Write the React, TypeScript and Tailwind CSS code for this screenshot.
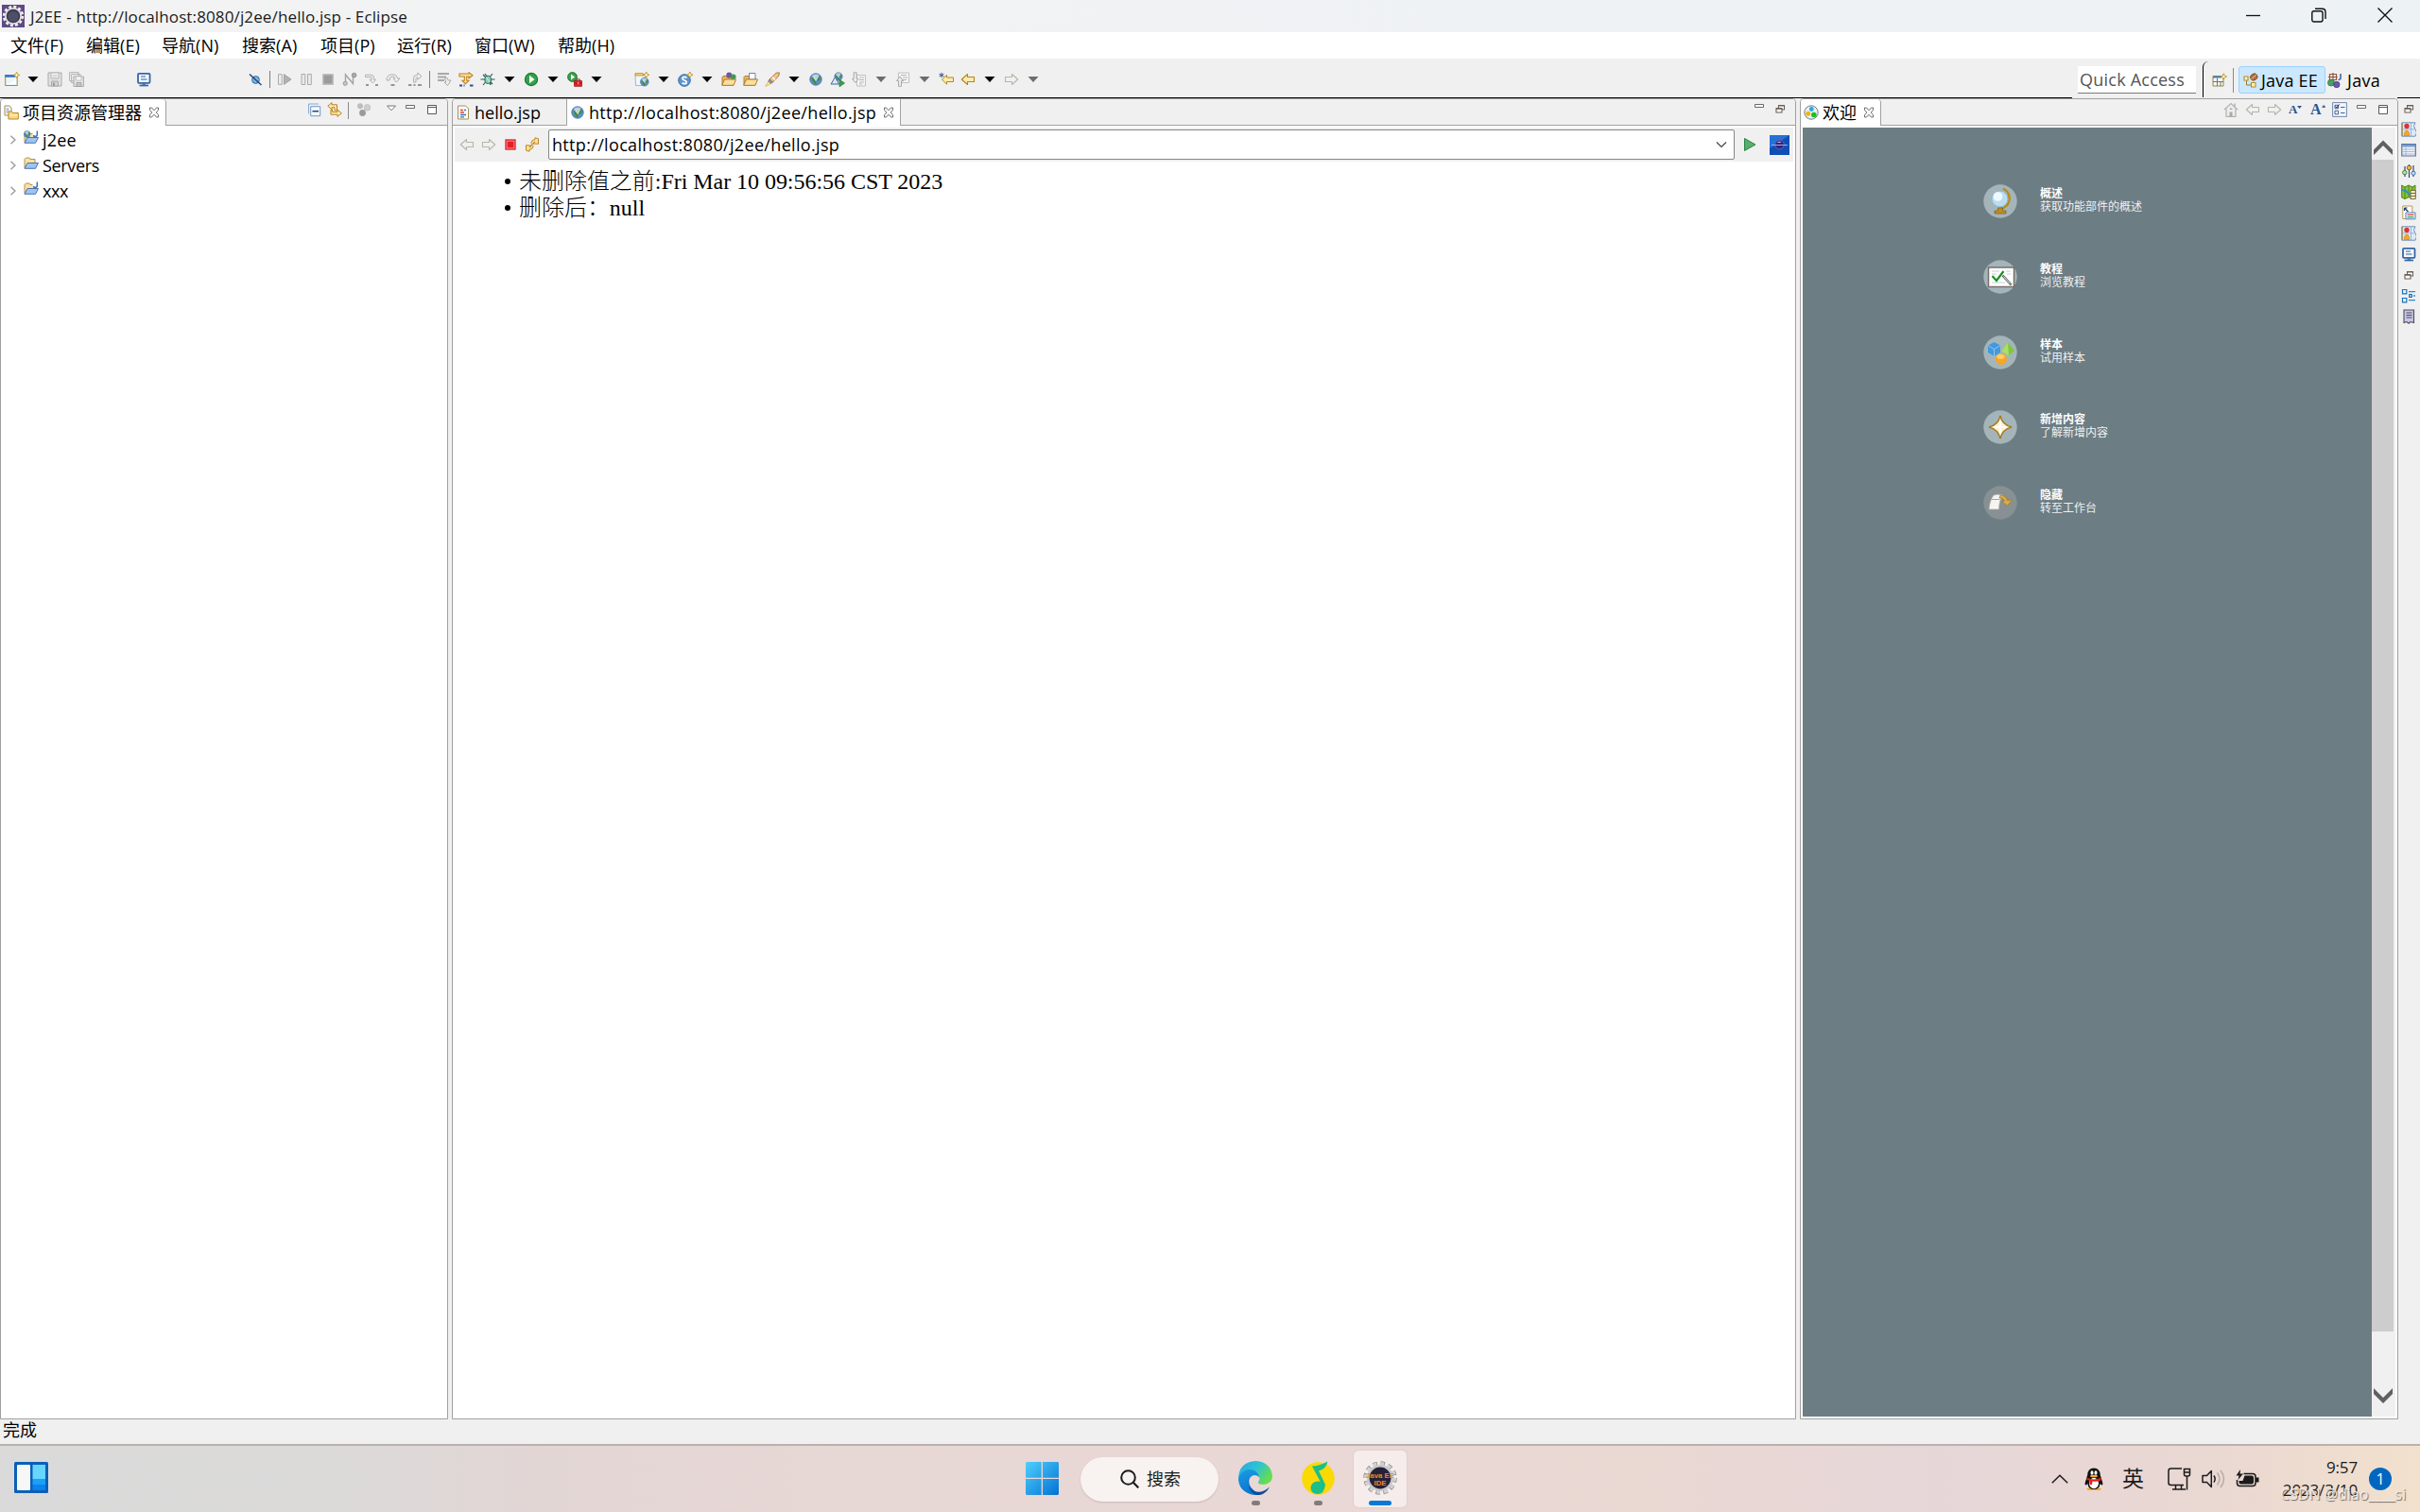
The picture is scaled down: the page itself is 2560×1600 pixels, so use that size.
import React from "react";

type P = { children?: React.ReactNode };

const LATIN = "font-['Open_Sans','Noto_Sans_CJK_SC',sans-serif]";

function Ic({ children }: P) {
  return (
    <svg viewBox="0 0 16 16" className="h-4 w-4 shrink-0" fill="none">
      {children}
    </svg>
  );
}

/* ---------- small reusable glyphs ---------- */

const Arrow = ({ gray = false }: { gray?: boolean }) => (
  <Ic>
    <path d="M2.500 5h11L8 11z" fill={gray ? "#6d6d6d" : "#000"} />
  </Ic>
);

const Plus = ({ x, y }: { x: number; y: number }) => (
  <path
    transform={`translate(${x} ${y})`}
    d="M0-3.200 1-1 3.200 0 1 1 0 3.200-1 1-3.200 0-1-1z"
    fill="#fff2b0"
    stroke="#b98a1e"
    strokeWidth=".8"
  />
);

const GlobeShape = ({ x = 8, y = 8, r = 6.2 }: { x?: number; y?: number; r?: number }) => (
  <g transform={`translate(${x} ${y}) scale(${r / 6.2})`}>
    <circle r="6.200" fill="#5b93cf" stroke="#3f6498" strokeWidth=".8" />
    <path d="M-4-4Q0-6.500 3.500-4.500L1.500-2Q-1 1-2.500-1z" fill="#d6ebf7" opacity=".75" />
    <path d="M-4.500-2 -1.500-1 0 1.500 1 5 -1 5Q-4 2-4.500-2zM1-2.500 4.500-3 4.500 0 2 2.500z" fill="#3f8a4c" />
    <path d="M-2-2 0 1 2.500-3" stroke="#f3e6a4" strokeWidth="1.200" />
  </g>
);

const NewWizard = () => (
  <Ic>
    <rect x=".7" y="3.500" width="12.500" height="11" fill="#eaf6fc" stroke="#a98a3f" />
    <path d="M.2 3h11v2.800H.2z" fill="#3c79c4" />
    <path d="M2 13Q9 12 11.500 7v6z" fill="#fff" />
    <Plus x={12.6} y={3.4} />
  </Ic>
);
const Save = () => (
  <Ic>
    <path d="M1 1h14v14H1z" fill="#e2e2e2" stroke="#a9a9a9" />
    <path d="M4 1h8v6H4z" fill="#f5f5f5" stroke="#b4b4b4" />
    <path d="M5.500 3.500h5M5.500 5.200h5" stroke="#c4c4c4" strokeWidth=".8" />
    <path d="M4.500 10h7v5h-7z" fill="#d2d2d2" stroke="#a9a9a9" />
    <path d="M6 11.500h2V15H6z" fill="#9d9d9d" />
  </Ic>
);
const SaveAll = () => (
  <Ic>
    <path d="M.6.6h9.500v9H.6zM2.600 2.600h9.500v9H2.600z" fill="#eee" stroke="#b4b4b4" />
    <path d="M5 5h10.400v10.400H5z" fill="#e2e2e2" stroke="#a9a9a9" />
    <path d="M7.500 5h5.500v4H7.500z" fill="#f7f7f7" stroke="#bbb" strokeWidth=".8" />
    <path d="M8 11.500h5v4H8z" fill="#c4c4c4" stroke="#a0a0a0" strokeWidth=".8" />
  </Ic>
);
const Monitor = () => (
  <Ic>
    <rect x="2" y="1.800" width="12.500" height="10" rx="1" fill="#f2f8fd" stroke="#3566a8" strokeWidth="1.800" />
    <path d="M5 5h5M5 8h6.500" stroke="#3d5b96" strokeWidth="1.200" />
    <path d="M6.500 12.500h3.500v1.300H6.500z" fill="#3566a8" />
    <path d="M3.500 14.500h9.500" stroke="#3566a8" strokeWidth="1.700" />
  </Ic>
);
const Skip = () => (
  <Ic>
    <circle cx="8.500" cy="8.500" r="3.900" fill="#7fb6df" stroke="#2b6a9c" />
    <path d="M2 2.500 14.500 14" stroke="#20407c" strokeWidth="1.400" />
  </Ic>
);
const Resume = () => (
  <Ic>
    <path d="M1.500 2.700h3.800v10.600H1.500z" fill="#ececec" stroke="#aaa" />
    <path d="M7.500 2.700 15 8l-7.500 5.300z" fill="#b2b2b2" stroke="#a0a0a0" />
  </Ic>
);
const Pause = () => (
  <Ic>
    <path d="M3 2.500h3.800v11H3zM9.500 2.500h3.800v11H9.500z" fill="#e9e9e9" stroke="#aaa" />
  </Ic>
);
const StopG = () => (
  <Ic>
    <rect x="3" y="3" width="10" height="10" fill="#9b9b9b" stroke="#b3b3b3" strokeWidth="1.600" />
  </Ic>
);
const Disconnect = () => (
  <Ic>
    <path d="M3.500 12V3l8 9.500V5" stroke="#a2a2a2" strokeWidth="1.400" />
    <circle cx="3.200" cy="12.300" r="2.100" fill="#c6c6c6" stroke="#9a9a9a" />
    <circle cx="12.600" cy="3.600" r="2.300" fill="#aaa" stroke="#8f8f8f" />
  </Ic>
);
const StepInto = () => (
  <Ic>
    <path d="M1.500 3.200h6q3 0 3 3v2h2.300L9.300 11.800 6 8.200h2.300v-1.500q0-1.200-1.200-1.200H1.500z" fill="#efefef" stroke="#b0b0b0" />
    <path d="M2 14h3M12 14h3" stroke="#949494" strokeWidth="2" />
  </Ic>
);
const StepOver = () => (
  <Ic>
    <path d="M1 9Q1 2.800 7 2.800q5 0 5.500 4.200H15l-3.700 4-3.300-4h2Q9.500 5 7 5 4 5 4 9z" fill="#efefef" stroke="#b0b0b0" />
    <path d="M5.500 14h4" stroke="#949494" strokeWidth="2" />
  </Ic>
);
const StepReturn = () => (
  <Ic>
    <path d="M6.500 11V6.500q0-3 3-3h1.300V1L15 4.700l-4.200 3.600V6H9.700Q9 6 9 7v4z" fill="#efefef" stroke="#b0b0b0" />
    <path d="M1 14h3.500M11 14h4M6.500 14h2" stroke="#949494" strokeWidth="1.800" />
  </Ic>
);
const DropFrame = () => (
  <Ic>
    <path d="M1 2h12M1 5.500h9M1 9h7" stroke="#a9a9a9" strokeWidth="1.900" />
    <path d="M9 6q3 0 3 3h3l-3.500 5.500L8 11h2q0-2-1-2z" fill="#f2f2f2" stroke="#aaa" />
  </Ic>
);
const StepFilters = () => (
  <Ic>
    <path d="M1 2h10V.8l4 3-4 3V5H8.700v4.300H11l-3.600 3.400L4 9.300h2.300V5H1z" fill="#fbe3a7" stroke="#be7f1c" strokeWidth="1.100" />
    <path d="M1 14.500h3M12 14.500h3.500M5.500 14.500h1" stroke="#2f4f86" strokeWidth="1.900" />
  </Ic>
);
const Bug = () => (
  <Ic>
    <path d="M8 8 3 3M8 8l5-6M8 8H.5M8 8h7.500M8 8l-5 6M8 8l5 5M5 2l2 3M11 14l-1-3" stroke="#1f5158" strokeWidth="1.100" />
    <ellipse cx="8.200" cy="8.300" rx="3.300" ry="4.100" fill="#8fd0a7" stroke="#275f66" />
    <path d="m6.500 6 3.500 5" stroke="#d8f3dd" />
  </Ic>
);
const Run = () => (
  <Ic>
    <circle cx="8" cy="8" r="6.600" fill="#35a04a" stroke="#1d7a35" strokeWidth="1.200" />
    <path d="M6 3.800 11.500 8 6 12.200z" fill="#fff" />
  </Ic>
);
const RunExt = () => (
  <Ic>
    <circle cx="5.500" cy="5.500" r="4.900" fill="#3a9f4c" stroke="#1d7a35" />
    <path d="M4 2.500 8 5.500 4 8.500z" fill="#fff" />
    <path d="M7.500 9.500h8v5.800h-8z" fill="#e0292b" stroke="#a21417" strokeWidth=".8" />
    <path d="M9.800 9.300V7.900h3.500v1.400M7.500 12h8" stroke="#a21417" strokeWidth="1" />
    <path d="M11 11.300h1.200v1.500H11z" fill="#ffdede" />
  </Ic>
);
const NewWeb = () => (
  <Ic>
    <path d="M1 2.500h10l1 4v8H1.500z" fill="#f0f6fb" stroke="#a9b6c4" />
    <path d="M1 1.500h8l1 2.500H1z" fill="#f2cf74" stroke="#b98f32" strokeWidth=".8" />
    <GlobeShape x={10.8} y={10.6} r={4.4} />
    <Plus x={12.6} y={3.2} />
  </Ic>
);
const NewServlet = () => (
  <Ic>
    <circle cx="7" cy="9" r="6.300" fill="#5c95cb" stroke="#3b6ea8" />
    <path d="M9.500 6.500Q7 4.500 5.200 6.200 4.300 8 7 9q3 1 2 3-2 1.500-4.500-.3" stroke="#fff" strokeWidth="1.700" />
    <Plus x={12.8} y={3.2} />
  </Ic>
);
const OpenFolder = ({ balls = false }: { balls?: boolean }) => (
  <Ic>
    <path d="M1 14V5.500l1-1h3.500L6.500 6H13v8z" fill="#e9b65a" stroke="#a9722b" strokeWidth=".9" />
    {balls ? (
      <>
        <circle cx="8.300" cy="3.600" r="3" fill="#6b57a5" />
        <circle cx="12.700" cy="5.300" r="2.900" fill="#3d9a55" />
      </>
    ) : (
      <path d="M6.500 8V1.500h6.500V8z" fill="#fff" stroke="#6f87b3" />
    )}
    <path d="M.7 14.300 3.500 8H15.500L13 14.300z" fill="#fbdf9a" stroke="#a9722b" strokeWidth=".9" />
  </Ic>
);
const Rocket = () => (
  <Ic>
    <path d="M5 8 12 1.200 15.300.8 15 4 8.500 11z" fill="#efc489" stroke="#a97335" strokeWidth=".9" />
    <path d="m8 5.500 3 3" stroke="#fff" strokeWidth="1.200" />
    <path d="M5 8 8.500 11 6 12.500 3.500 10z" fill="#8e99ad" stroke="#5f6b80" strokeWidth=".7" />
    <path d="M3.500 10.500 .8 15.300 6 12.800z" fill="#fff3a0" stroke="#e3a93b" strokeWidth=".8" />
  </Ic>
);
const Globe = () => (
  <Ic>
    <GlobeShape />
  </Ic>
);
const Launch = () => (
  <Ic>
    <GlobeShape x={9} y={5} r={4.2} />
    <path d="M1 13 5.500 5.500 9.500 13z" fill="#dbe8f6" stroke="#43659c" />
    <path d="M10 8l5.500 4-5.500 3.800z" fill="#37a050" stroke="#1e7a36" strokeWidth=".7" />
  </Ic>
);
const NextAnn = () => (
  <Ic>
    <path d="M5.500 3.500h9V15h-9z" fill="#f5f5f5" stroke="#c0c0c0" />
    <path d="M8 6h5M8 8.500h5M8 11h5M8 13h3" stroke="#b5b5b5" />
    <path d="M2.200.8h3v6.500h2L3.700 11.500.6 7.300h1.600z" fill="#eee" stroke="#a8a8a8" />
  </Ic>
);
const PrevAnn = () => (
  <Ic>
    <path d="M3.500 1h11v10.500h-11z" fill="#f5f5f5" stroke="#c0c0c0" />
    <path d="M6 3.500h6M8 6h5M8 8.500h4" stroke="#b5b5b5" />
    <path d="M3.500 15.300V9.500h-2L5 5l3.500 4.500h-2v5.800z" fill="#eee" stroke="#a8a8a8" />
  </Ic>
);
const BackShape = ({ fill, stroke }: { fill: string; stroke: string }) => (
  <path d="M1.300 8 7.500 2.500v3H14.500v5H7.500v3z" fill={fill} stroke={stroke} strokeWidth="1.100" strokeLinejoin="round" />
);
const Back = ({ gray = false }: { gray?: boolean }) => (
  <Ic>
    <BackShape fill={gray ? "#f0f0ee" : "#fdecae"} stroke={gray ? "#b6b6ae" : "#b9841c"} />
  </Ic>
);
const Fwd = () => (
  <Ic>
    <g transform="matrix(-1 0 0 1 16 0)">
      <BackShape fill="#f0f0ee" stroke="#b6b6ae" />
    </g>
  </Ic>
);
const LastEdit = () => (
  <Ic>
    <path d="M3.500 8 8.500 3.500v2.500H15.500v4.500H8.500v2.700z" fill="#fdecae" stroke="#b9841c" strokeLinejoin="round" />
    <path d="M3 .8v5.400M.5 2.200l5 2.600M5.500 2.200l-5 2.600" stroke="#27497e" strokeWidth=".9" />
  </Ic>
);

/* view chrome */
const Close = () => (
  <svg viewBox="0 0 12 12" className="h-3 w-3 shrink-0" fill="none">
    <path
      d="M1.500 1h2L6 3.800 8.500 1h2v2.500L8.200 6l2.300 2.500V11h-2L6 8.200 3.500 11h-2V8.500L3.800 6 1.500 3.500z"
      stroke="#666"
      fill="#fafafa"
      strokeWidth=".95"
    />
  </svg>
);
const MinBtn = () => (
  <Ic>
    <path d="M3.500 3.500h9v3h-9z" fill="#fff" stroke="#6a6a6a" />
  </Ic>
);
const MaxBtn = () => (
  <Ic>
    <path d="M3.500 3.500h9v9h-9zM3.500 5.500h9" fill="#fff" stroke="#5b5b5b" />
  </Ic>
);
const RestoreBtn = () => (
  <Ic>
    <path d="M6.500 4.500h6v4.500h-6zM6.500 5h6" fill="#fff" stroke="#6a5f57" strokeWidth="1.100" />
    <path d="M4 7.500h6V12H4zM4 8.200h6" fill="#fff" stroke="#6a5f57" strokeWidth="1.100" />
  </Ic>
);
const MenuTri = () => (
  <Ic>
    <path d="M3.500 4h9L8 8.800z" fill="#fff" stroke="#777" />
  </Ic>
);
const ExplorerIcon = () => (
  <Ic>
    <path d="M1 1h5l2 2v8H1z" fill="#fff" stroke="#a58a45" />
    <path d="M2.500 4h3M2.500 6h3M2.500 8h2" stroke="#5f86c2" strokeWidth=".9" />
    <path d="M5 15V7h3.500l1 1.500H15.300V15z" fill="#fbd983" stroke="#b8862e" />
    <path d="M6 11h9" stroke="#fff2c8" />
  </Ic>
);
const Collapse = () => (
  <Ic>
    <path d="M2.500 12.500v-10.500h10.500" stroke="#8baad3" />
    <path d="M4.700 4.700h10v10h-10z" fill="#f3f9fd" stroke="#7096c8" />
    <path d="M6.500 9.700h6.500" stroke="#1c3f86" strokeWidth="1.500" />
  </Ic>
);
const Link = () => (
  <Ic>
    <path d="M.8 4.200 5 .6v2.200h5.500v6H8V5.700H5v2.100z" fill="#fdeab2" stroke="#bb811a" strokeWidth="1" />
    <path d="M15.300 11.800 11 8.200v2.200H5.500V8H4v5.200h7v2.200z" fill="#fdeab2" stroke="#bb811a" strokeWidth="1" />
  </Ic>
);
const Focus = () => (
  <Ic>
    <circle cx="4" cy="4.300" r="3" fill="#bdbdbd" />
    <circle cx="11.500" cy="5.800" r="3.200" fill="#cfcfcf" stroke="#c0c0c0" />
    <circle cx="6.500" cy="11.500" r="3.400" fill="#9a9a9a" />
  </Ic>
);
const Project = ({ web = false, mark = true }: { web?: boolean; mark?: boolean }) => (
  <Ic>
    <path d="M1 12.500V3.500L2.500 2H6l1 1.500h5v9z" fill="#fbe2a0" stroke="#a98643" strokeWidth=".9" />
    <path d="M1 13.300 4 7.500H15.500L12.500 13.300z" fill="#9fc4f0" stroke="#3d67ad" strokeWidth=".9" />
    {web && <GlobeShape x={3.7} y={4} r={3.4} />}
    {mark && (
      <>
        <path d="M9.500 0h6.500v5.500H9.500z" fill="#fff" />
        <path d="M14.300.5v4q0 2-2.300 2-1.500 0-1.500-1.500" stroke="#4370b3" strokeWidth="1.500" />
      </>
    )}
  </Ic>
);
const JspFile = () => (
  <Ic>
    <path d="M2.500 1h8l3 3v11h-11z" fill="#fdfdf6" stroke="#a4905a" />
    <path d="M5 5.500h3M5 8h4" stroke="#d04a4a" strokeWidth="1.300" />
    <path d="M5 10.500h6M5 12.800h4M9 5.500h2" stroke="#3f6fb5" strokeWidth="1.300" />
  </Ic>
);
const StopRed = () => (
  <Ic>
    <rect x="2.800" y="2.800" width="10.400" height="10.400" fill="#e8242d" stroke="#d3444a" />
    <rect x="4.200" y="4.200" width="7.600" height="7.600" fill="#e71d27" stroke="#f7999c" strokeWidth=".8" />
  </Ic>
);
const Refresh = () => (
  <Ic>
    <path d="M6.800 6.200Q7.500 2.700 11 2.600V.8l3.500 1v5.500L9.200 7l1.700-1.800Q9 5.200 8.600 8z" fill="#fbe19b" stroke="#b8811c" strokeWidth=".95" />
    <path d="M9.200 9.800Q8.500 13.300 5 13.400v1.800l-3.500-1V8.700L6.800 9l-1.700 1.800Q7 10.800 7.400 8z" fill="#fbe19b" stroke="#b8811c" strokeWidth=".95" />
  </Ic>
);
const Go = () => (
  <Ic>
    <path d="M2.500 1.500 14 8 2.500 14.500z" fill="#55b06c" stroke="#2d8146" />
  </Ic>
);
const WelcomeIcon = () => (
  <Ic>
    <circle cx="8" cy="8" r="7.200" fill="#e9f0ee" stroke="#6c7f86" />
    <circle cx="8.300" cy="4.500" r="2.400" fill="#29a8e6" />
    <circle cx="4.700" cy="9.300" r="2.500" fill="#f2b314" />
    <circle cx="10.800" cy="10.500" r="2.800" fill="#17c21d" />
  </Ic>
);
const Home = () => (
  <Ic>
    <path d="M1 8 8 1.500 15 8M3 7v8.300h10V7" fill="#ececec" stroke="#b2b2ae" strokeWidth="1.200" />
    <path d="M12 1.500v3.500" stroke="#b2b2ae" strokeWidth="1.500" />
    <path d="M6.500 10.500h3v5h-3zM6.800 6.500h2.500V8H6.800z" fill="#a9a9a5" />
  </Ic>
);
const Customize = () => (
  <Ic>
    <path d="M.6.6h14.800v14.800H.6z" fill="#f0f6fd" stroke="#7088b0" />
    <path d="M3 3.300h3.500v3.500H3zM3 9.300h3.500v3.500H3z" fill="#fff" stroke="#3d4c6e" strokeWidth=".9" />
    <path d="m3.500 4.500 1.300 1.500L7.500 2.500" stroke="#222" />
    <path d="M9 5.500h4.500M9 11.500h4.500" stroke="#3e62a3" strokeWidth="1.200" />
  </Ic>
);
const OpenPersp = () => (
  <Ic>
    <path d="M1 3.500h11v10.500H1z" fill="#f4f8fa" stroke="#96854e" />
    <path d="M1 3.500h9v2H1z" fill="#4b82b9" />
    <path d="M5.500 5.500V14M1 9.500h11M9 9.500V14" stroke="#7d7556" />
    <Plus x={12.3} y={4} />
  </Ic>
);
const JavaEE = () => (
  <Ic>
    <path d="M3.500 5.500v7.500h5" stroke="#9b7b2c" />
    <path d="M1 4h4v4H1zM8.500 10.500h4.500v4.500H8.500z" fill="#fff3c2" stroke="#b88d22" strokeWidth="1.100" />
    <ellipse cx="11.300" cy="4.500" rx="3.900" ry="3.400" transform="rotate(-35 11.300 4.500)" fill="#b0703d" stroke="#83451d" strokeWidth=".8" />
    <path d="M8.500 6.500Q11 5 14 2" stroke="#ecc79a" />
  </Ic>
);
const JavaP = () => (
  <Ic>
    <path d="M2.500 1.500h7v6h-7zM.8 4.500h10M6 0v8" stroke="#8c5a3c" strokeWidth="1.200" />
    <path d="M14 1v4.500q0 2-2.500 2" stroke="#3d6aa9" strokeWidth="1.600" />
    <circle cx="4" cy="10.500" r="3.500" fill="#4a9e62" stroke="#2e7747" strokeWidth=".8" />
    <circle cx="9.800" cy="12.500" r="3.200" fill="#6a58a9" stroke="#473784" strokeWidth=".8" />
  </Ic>
);
const Servers = () => (
  <Ic>
    <path d="M1 .8h14q-3 4 0 7t0 7.400H1z" fill="#ddeaf7" stroke="#6f8fba" />
    <path d="M1 .8v14.500" stroke="#a0945a" strokeWidth="1.500" />
    <path d="M10.500 1v14M2 7.800h12" stroke="#8dabd1" strokeWidth=".8" />
    <circle cx="6" cy="4.500" r="2.700" fill="#df3138" />
    <path d="M3.200 14.500q0-5 2.800-5.500 2.800.5 2.800 5.500z" fill="#f6a623" stroke="#d07a12" strokeWidth=".6" />
  </Ic>
);
const TableIc = () => (
  <Ic>
    <path d="M.8 1.500h14.500v12.500H.8z" fill="#eef3fa" stroke="#5e6f95" strokeWidth="1.200" />
    <path d="M1 2h14v2.500H1z" fill="#6f9fd6" />
    <path d="M1 7h14M1 9.500h14M1 12h14M5 4.500V14" stroke="#a5b2cb" strokeWidth=".9" />
  </Ic>
);
const Sliders = () => (
  <Ic>
    <path d="M4 3v11M8.500 1v14M13 2v12" stroke="#2d4a7d" strokeWidth="1.200" />
    <circle cx="3.800" cy="9.500" r="2.200" fill="#b6e0a1" stroke="#47833a" />
    <circle cx="8.500" cy="4.500" r="2.300" fill="#e6b84a" stroke="#8f6417" />
    <circle cx="13" cy="10.300" r="2.100" fill="#c3dcf4" stroke="#486fa8" />
  </Ic>
);
const MapIc = () => (
  <Ic>
    <path d="M.7 1 4 3l4-2 4 2 3-2v13l-3 1.500-4-2-4 2L.7 14z" fill="#86c832" stroke="#4c7e1b" />
    <path d="M4 3v12M8 1v12M12 3v10" stroke="#4c7e1b" strokeWidth=".9" />
    <path d="M1 6q4 0 6 3t4 1" stroke="#3190c7" strokeWidth="2" />
    <path d="M10 6.500h5.300v9H10z" fill="#f7edc1" stroke="#7a6a3a" />
    <path d="M10 9.500h5.300M10 12.500h5.300" stroke="#7a6a3a" />
  </Ic>
);
const Snippets = () => (
  <Ic>
    <path d="M1.800 1h10v13.500h-10z" fill="#fff" stroke="#b19d5d" />
    <path d="m3.500 3 4 4M3.500 3h3M3.500 3v3" stroke="#223b66" strokeWidth="1.200" />
    <path d="M5 8h10v6.800H5z" fill="#fff" stroke="#4d7cba" />
    <path d="M6.500 10.300h7" stroke="#da3b36" strokeWidth="1.300" />
    <path d="M6.500 12.700h7" stroke="#2f9b55" strokeWidth="1.300" />
  </Ic>
);
const Outline = () => (
  <Ic>
    <path d="M1.500 1.500h4.300v4.300H1.500zM1.500 10.500h4.300v4.300H1.500zM8.700 6.700h2.600v2.600H8.700z" fill="#e5f3fc" stroke="#1e73b5" strokeWidth="1.200" />
    <path d="M8 3.600h7M8 12.600h7M13 8h2" stroke="#2f8acb" strokeWidth="1.300" />
  </Ic>
);
const TaskIc = () => (
  <Ic>
    <path d="M3 1h10.500v13.500l-3.500-1-2 1.700-2-1.700-3 1z" fill="#c9c7e8" stroke="#4d4d55" strokeWidth="1.100" />
    <path d="M5.500 4h6M5.500 6.500h6M5.500 9h6" stroke="#4a4a58" strokeWidth="1.100" />
  </Ic>
);

/* ---------- toolbar cells ---------- */
const C = ({ children }: P) => <div className="flex w-[23px] shrink-0 justify-center">{children}</div>;
const CW = ({ children }: P) => <div className="flex w-6 shrink-0 justify-center">{children}</div>;
const CN = ({ gray }: { gray?: boolean }) => (
  <div className="flex w-[22px] shrink-0 justify-center pr-px">
    <Arrow gray={gray} />
  </div>
);
const Sep = () => (
  <div className="flex h-[18px] w-2 shrink-0 justify-center">
    <div className="w-px bg-[#7d7d7d]" />
  </div>
);

function TitleBar() {
  return (
    <div className="flex h-[34px] items-center bg-gradient-to-r from-[#f3f3f3] to-[#edf2f5] pl-0.5">
      <svg viewBox="0 0 24 24" className="h-6 w-6 shrink-0">
        <rect width="24" height="24" fill="#5d4a86" />
        <circle cx="12" cy="12" r="9.800" fill="none" stroke="#f2efe9" strokeWidth="2.800" strokeDasharray="3 2.130" />
        <circle cx="12" cy="12" r="8.200" fill="#3b3a50" stroke="#e0dcdc" strokeWidth="1.800" />
        <circle cx="12" cy="12.500" r="5.500" fill="#4b5069" />
      </svg>
      <span className="ml-[6px] whitespace-nowrap text-[17px] leading-none tracking-[0.130px] text-[#1a1a1a]">
        J2EE - http://localhost:8080/j2ee/hello.jsp - Eclipse
      </span>
      <div className="ml-auto flex items-center gap-[54px] pb-0.5 pr-[29px]">
        <svg viewBox="0 0 16 16" className="h-4 w-4">
          <path d="M1 8.500h15" stroke="#111" strokeWidth="1.300" />
        </svg>
        <svg viewBox="0 0 16 16" className="h-4 w-4" fill="none">
          <rect x=".8" y="3.800" width="11.200" height="11.200" rx="2" stroke="#111" strokeWidth="1.400" />
          <path d="M4 1.200h7.500q3.500 0 3.500 3.500V12" stroke="#111" strokeWidth="1.400" />
        </svg>
        <svg viewBox="0 0 16 16" className="h-4 w-4">
          <path d="m.5.5 15 15M15.500.5l-15 15" stroke="#111" strokeWidth="1.400" />
        </svg>
      </div>
    </div>
  );
}

const MENU = [
  ["文件", "(F)", "w-20"],
  ["编辑", "(E)", "w-20"],
  ["导航", "(N)", "w-[85px]"],
  ["搜索", "(A)", "w-[83px]"],
  ["项目", "(P)", "w-[81px]"],
  ["运行", "(R)", "w-[82px]"],
  ["窗口", "(W)", "w-[88px]"],
  ["帮助", "(H)", "w-20"],
];

function MenuBar() {
  return (
    <div className="flex h-7 items-center bg-white pl-[11px] text-black">
      {MENU.map(([zh, key, w]) => (
        <div key={zh} className={`flex items-center whitespace-nowrap leading-none ${w}`}>
          <span className="text-[18px]">{zh}</span>
          <span className="text-[18px] tracking-[0.100px]">{key}</span>
        </div>
      ))}
    </div>
  );
}

function ToolBar() {
  return (
    <div className="flex h-[41px] items-center bg-[#f0f0f0]">
      <div className="flex items-center pl-px pt-[3px]">
        <C><NewWizard /></C><CN />
        <C><Save /></C><C><SaveAll /></C>
        <div className="w-12" />
        <C><Monitor /></C>
        <div className="w-[95px]" />
        <C><Skip /></C>
        <Sep />
        <C><Resume /></C><C><Pause /></C><C><StopG /></C><C><Disconnect /></C>
        <C><StepInto /></C><C><StepOver /></C><C><StepReturn /></C>
        <Sep />
        <C><DropFrame /></C><C><StepFilters /></C>
        <CW><Bug /></CW><CN />
        <CW><Run /></CW><CN />
        <CW><RunExt /></CW><CN />
        <div className="w-[25px]" />
        <CW><NewWeb /></CW><CN />
        <CW><NewServlet /></CW><CN />
        <C><OpenFolder balls /></C><C><OpenFolder /></C>
        <CW><Rocket /></CW><CN />
        <C><Globe /></C><C><Launch /></C>
        <C><NextAnn /></C><C><Arrow gray /></C>
        <C><PrevAnn /></C><C><Arrow gray /></C>
        <C><LastEdit /></C>
        <CW><Back /></CW><CN />
        <C><Fwd /></C><C><Arrow gray /></C>
      </div>
      <div className="ml-auto flex h-full items-center">
        <div className="mt-1 flex h-[29px] w-[125px] items-center border-b border-[#7a7a7a] bg-white pl-[2px]">
          <span className="whitespace-nowrap text-[18px] leading-none tracking-[0.230px] text-[#555]">Quick Access</span>
        </div>
        <div className="ml-[7px] h-full w-2 pt-[3px]">
          <div className="h-full rounded-tl-md border-l border-black" />
        </div>
        <div className="ml-0.5 flex items-center pt-1">
          <OpenPersp />
          <div className="ml-[6px] h-[26px] w-px bg-[#8a8a8a]" />
          <div className="ml-[5px] flex h-[29px] w-[92px] items-center rounded-[3px] border border-[#99d1ff] bg-[#cce8ff] pl-1">
            <JavaEE />
            <span className="ml-[3px] whitespace-nowrap text-[18px] leading-none tracking-[0.200px]">Java EE</span>
          </div>
          <div className="ml-0.5 flex w-[98px] items-center">
            <JavaP />
            <span className="ml-[5px] text-[18px] leading-none tracking-[0.300px]">Java</span>
          </div>
        </div>
      </div>
    </div>
  );
}

const TREE: [string, string, React.ReactNode][] = [
  ["j2ee", "tracking-[0.200px]", <Project web key="j2ee" />],
  ["Servers", "tracking-[-0.350px]", <Project mark={false} key="servers" />],
  ["xxx", "tracking-[-0.400px]", <Project key="xxx" />],
];

function ProjectExplorer() {
  return (
    <section className="flex w-[474px] flex-col rounded-t-[4px] border border-[#a0a0a0] bg-white">
      <div className="flex h-[28px] rounded-t-[4px] bg-[#f0f0f0]">
        <div className="flex w-[175px] items-center rounded-t-[4px] border-r border-[#a0a0a0] bg-white pl-[3px]">
          <ExplorerIcon />
          <span className="ml-1 text-[18px] leading-none">项目资源管理器</span>
          <span className="ml-[7px]"><Close /></span>
        </div>
        <div className="flex flex-1 items-start border-b border-[#a0a0a0] pl-[148px] pt-[3px]">
          <Collapse />
          <div className="ml-[6px]"><Link /></div>
          <div className="ml-[6px] h-[18px] w-px bg-[#8a8a8a]" />
          <div className="ml-2"><Focus /></div>
          <div className="ml-[13px]"><MenuTri /></div>
          <div className="ml-1"><MinBtn /></div>
          <div className="ml-[7px]"><MaxBtn /></div>
        </div>
      </div>
      <div className="pt-px">
        {TREE.map(([t, tracking, ic]) => (
          <div key={t} className="flex h-[27px] items-center pl-[9px]">
            <svg viewBox="0 0 8 10" className="h-[10px] w-2" fill="none">
              <path d="m1.500.8 4.500 4.200L1.500 9.200" stroke="#999" strokeWidth="1.300" />
            </svg>
            <span className="ml-[7px] pb-1">{ic}</span>
            <span className={`ml-1 text-[18px] leading-none ${tracking}`}>{t}</span>
          </div>
        ))}
      </div>
    </section>
  );
}

function Browser() {
  return (
    <section className="ml-1 flex w-[1422px] flex-col rounded-t-[4px] border border-[#a0a0a0] bg-white">
      <div className="flex h-[28px] rounded-t-[4px] bg-[#f0f0f0]">
        <div className="flex w-[121px] items-center border-b border-r border-[#a0a0a0] pl-[3px]">
          <JspFile />
          <span className="ml-1 text-[18px] leading-none">hello.jsp</span>
        </div>
        <div className="flex w-[353px] items-center border-r border-[#a0a0a0] bg-white pl-[3px]">
          <Globe />
          <span className="ml-1 whitespace-nowrap text-[18px] leading-none tracking-[0.330px]">http://localhost:8080/j2ee/hello.jsp</span>
          <span className="ml-[7px]"><Close /></span>
        </div>
        <div className="flex flex-1 items-start justify-end gap-[6px] border-b border-[#a0a0a0] pr-2 pt-[2px]">
          <MinBtn /><RestoreBtn />
        </div>
      </div>
      <div className="mx-[2px] mt-[2px] flex h-[36px] items-center bg-[#f0f0f0] pl-[5px]">
        <div className="flex gap-[7px]"><Back gray /><Fwd /><StopRed /><Refresh /></div>
        <div className="ml-[9px] flex h-8 w-[1255px] items-center justify-between rounded-[2px] border border-[#868686] bg-white pl-[3px] pr-[7px]">
          <span className="whitespace-nowrap pb-px text-[18px] leading-none tracking-[0.330px]">http://localhost:8080/j2ee/hello.jsp</span>
          <svg viewBox="0 0 12 8" className="h-2 w-3" fill="none">
            <path d="m1 1.500 5 5 5-5" stroke="#444" strokeWidth="1.200" />
          </svg>
        </div>
        <div className="ml-2"><Go /></div>
        <svg viewBox="0 0 21 21" className="ml-[13px] h-[21px] w-[21px]">
          <rect width="21" height="21" fill="#0f4fb5" />
          <path d="M0 0h21L0 14z" fill="#2272d8" />
          <circle cx="10.500" cy="10" r="4.800" fill="#33257c" stroke="#6f68c4" strokeWidth=".8" />
          <path d="M2 10.500h17" stroke="#a9b4f0" strokeWidth=".9" />
          <path d="M7.500 8q3-2.500 5 0z" fill="#b9b2ee" />
        </svg>
      </div>
      <ul className="pl-[54px] pt-[7px] font-['Liberation_Serif','Noto_Sans_CJK_SC',serif] text-[24px] leading-[28px] text-black">
        {["未删除值之前:Fri Mar 10 09:56:56 CST 2023", "删除后：null"].map((t) => (
          <li key={t} className="flex h-7 items-center">
            <span className="ml-px h-[6px] w-[6px] rounded-full bg-black" />
            <span className="ml-[9px] whitespace-nowrap font-light tracking-[-0.040px]">{t}</span>
          </li>
        ))}
      </ul>
    </section>
  );
}

const Disc = ({ children, dim = false }: P & { dim?: boolean }) => (
  <svg viewBox="0 0 36 36" className="h-9 w-9 shrink-0" fill="none">
    <circle cx="18" cy="18" r="17.700" fill={dim ? "#879194" : "#a4b5ba"} />
    {children}
  </svg>
);

const WELCOME: [string, string, React.ReactNode][] = [
  ["概述", "获取功能部件的概述", (
    <Disc key="1">
      <path d="M21 4.500q8 4 6.500 13-2.500 8-10 8.500" stroke="#b98a1d" strokeWidth="2.400" />
      <circle cx="17.500" cy="15.500" r="8.500" fill="#b9def4" stroke="#8fb3cc" />
      <circle cx="15.500" cy="13" r="4.800" fill="#eef9fe" />
      <path d="M15.500 25h5v3h3.500v3H12v-3h3.500z" fill="#c08d22" stroke="#7f5c14" strokeWidth=".7" />
    </Disc>
  )],
  ["教程", "浏览教程", (
    <Disc key="2">
      <rect x="5.500" y="8" width="27" height="20.500" fill="#fff" stroke="#7a6e69" strokeWidth="1.500" />
      <path d="M9 12h8M9 15h5M9 24h14M24 12h5M25 15h4" stroke="#b7d4d9" />
      <path d="m9.500 17 4.500 5 7.500-10" stroke="#1a9022" strokeWidth="2.200" />
      <path d="m20.500 16.500 9 10" stroke="#5e6a62" strokeWidth="2.600" />
      <path d="m21.500 17.500 7 8" stroke="#dfe6e1" strokeWidth="1" />
    </Disc>
  )],
  ["样本", "试用样本", (
    <Disc key="3">
      <path d="m11.500 7 6.500 3.500v7.500l-6.500 4-6.500-4v-7.500z" fill="#4299dd" />
      <path d="m5 10.500 6.500 4 6.500-4M11.500 14.500V22" stroke="#8cc8f2" />
      <path d="M26 7.500 33 16l-6 5.500-7.500-5z" fill="#80c83d" />
      <path d="M26 7.500 27 21.500l-7.500-5z" fill="#aae063" />
      <circle cx="19" cy="25" r="6" fill="#f8a61e" />
      <ellipse cx="18.500" cy="22.500" rx="4" ry="2.500" fill="#fdcf6d" />
    </Disc>
  )],
  ["新增内容", "了解新增内容", (
    <Disc key="4">
      <path d="M18 6q2 9.500 12 12-10 2.500-12 12-2-9.500-12-12 10-2.500 12-12z" fill="#fff0c8" stroke="#a37b22" strokeWidth="1.400" />
      <path d="M18 11v14M11 18h14" stroke="#fff" strokeWidth="1.800" />
    </Disc>
  )],
  ["隐藏", "转至工作台", (
    <Disc key="5" dim>
      <path d="M11 10Q15 8.500 21 10q-4 4-4.500 15H6Q7 15 11 10z" fill="#f6f4f2" stroke="#b3aca8" strokeWidth=".7" />
      <path d="M8.500 14.500h9" stroke="#d2a24a" strokeWidth="1" />
      <path d="M18 10q6 0 7.500 5.500l5-.5-5 6-6-4 3-1Q21 12.500 17 13z" fill="#d9ab4b" stroke="#a5791f" strokeWidth=".7" />
    </Disc>
  )],
];

function WelcomeView() {
  return (
    <section className="ml-1 flex w-[633px] flex-col rounded-t-[4px] border border-[#a0a0a0] bg-white">
      <div className="flex h-[28px] shrink-0 rounded-t-[4px] bg-[#f0f0f0]">
        <div className="flex w-[85px] items-center rounded-t-[4px] border-r border-[#a0a0a0] bg-white pl-[3px]">
          <WelcomeIcon />
          <span className="ml-1 text-[18px] leading-none">欢迎</span>
          <span className="ml-[7px]"><Close /></span>
        </div>
        <div className="flex flex-1 items-start justify-end gap-[7px] border-b border-[#a0a0a0] pr-[7px] pt-[3px]">
          <Home /><Back gray /><Fwd />
          <span className="flex h-4 w-4 items-center font-['Liberation_Serif',serif] text-[13px] font-bold text-[#27548f]">
            A<svg viewBox="0 0 5 10" className="h-[10px] w-[5px]"><path d="M0 1h5L2.500 4z" fill="#27548f" /></svg>
          </span>
          <span className="flex h-4 w-4 items-center font-['Liberation_Serif',serif] text-[16px] font-bold text-[#27548f]">
            A<svg viewBox="0 0 5 12" className="h-3 w-[5px]"><path d="M0 3.500h5L2.500.5z" fill="#27548f" /></svg>
          </span>
          <Customize /><MinBtn /><MaxBtn />
        </div>
      </div>
      <div className="m-[2px] flex flex-1">
        <div className="flex w-[602px] flex-col bg-[#6d7d84] pl-[191px] pt-[60px]">
          {WELCOME.map(([h, s, ic]) => (
            <div key={h} className="flex h-[79.750px] items-start">
              {ic}
              <div className="ml-6 pt-[3px] text-[12px] leading-[14px] text-white">
                <div className="font-bold">{h}</div>
                <div className="text-[#edf0f1]">{s}</div>
              </div>
            </div>
          ))}
        </div>
        <div className="flex flex-1 flex-col items-center bg-[#f0f0f0] pr-0.5">
          <svg viewBox="0 0 20 34" className="h-[34px] w-5 shrink-0" fill="none">
            <path d="M0 23.500 10 13.500 20 23.500V29L10 19 0 29z" fill="#606060" />
          </svg>
          <div className="h-[1240px] w-[23px] bg-[#cdcdcd]" />
          <svg viewBox="0 0 20 20" className="mt-[60px] h-5 w-5" fill="none">
            <path d="M0 0 10 10 20 0V6L10 16 0 6z" fill="#606060" />
          </svg>
        </div>
      </div>
    </section>
  );
}

function Strip() {
  return (
    <aside className="flex w-[23px] flex-col items-center gap-[6px] pr-0.5 pt-[3px]">
      <RestoreBtn /><Servers /><TableIc /><Sliders /><MapIc /><Snippets /><Servers /><Monitor /><RestoreBtn /><Outline /><TaskIc />
    </aside>
  );
}

function TaskBar() {
  return (
    <footer className="relative flex h-[72px] items-start border-t-2 border-[#b8b1ae] bg-[linear-gradient(90deg,#dadada_0%,#dbdad9_14%,#e2d6d5_22%,#e7d7d5_35%,#e9d8d5_55%,#ead8d3_68%,#e6d6d8_80%,#ead8d2_92%,#f2e1cd_100%)]">
      <svg viewBox="0 0 36 33" className="ml-[15px] mt-[17px] h-[33px] w-9">
        <rect width="36" height="33" rx="1.500" fill="#0c5fb8" />
        <rect x="3" y="3" width="14" height="27" rx="1" fill="#f7f7f7" />
        <path d="M19.500 3H33v15H19.500z" fill="#67d6ff" />
        <path d="M19.500 18H33v6H19.500z" fill="#1ba0f7" />
        <path d="M19.500 24H33v6H19.500z" fill="#0a84ea" />
      </svg>
      <svg viewBox="0 0 35 35" className="ml-[1034px] mt-[17px] h-[35px] w-[35px]">
        <defs>
          <linearGradient id="wn" x1="0" y1="0" x2="1" y2="1">
            <stop offset="0" stopColor="#4fd0fd" />
            <stop offset="1" stopColor="#0271d4" />
          </linearGradient>
        </defs>
        <path d="M1 0h15.700v16.700H0V1zM18 0h16l1 1v15.700H18zM0 18h16.700v17H1l-1-1zM18 18h17v16l-1 1H18z" fill="url(#wn)" />
      </svg>
      <div className="ml-[23px] mt-3 flex h-[47px] w-[146px] items-center rounded-full bg-[#f8f2f1] pb-0.5 pl-[42px] shadow-[0_1px_2px_#c9b9b7]">
        <svg viewBox="0 0 20 20" className="h-5 w-5" fill="none">
          <circle cx="8.500" cy="8.500" r="7.300" stroke="#1b1b1b" strokeWidth="2" />
          <path d="m13.800 13.800 5.500 5.500" stroke="#1b1b1b" strokeWidth="2.200" />
        </svg>
        <span className="ml-2 text-[18px] leading-none text-[#1b1b1b]">搜索</span>
      </div>
      <div className="ml-[21px] mt-4 flex w-9 flex-col items-center">
        <svg viewBox="0 0 36 36" className="h-9 w-9" fill="none">
          <defs>
            <linearGradient id="e1" x1="0" y1="0" x2="1" y2=".5">
              <stop offset="0" stopColor="#2aa5e8" />
              <stop offset=".55" stopColor="#2cc3d2" />
              <stop offset="1" stopColor="#67dd4e" />
            </linearGradient>
            <linearGradient id="e2" x1="0" y1="0" x2=".3" y2="1">
              <stop offset="0" stopColor="#1b9de2" />
              <stop offset="1" stopColor="#0b74d1" />
            </linearGradient>
          </defs>
          <path d="M0 18Q1 1 18.500 0 35 1.500 36 16.500 35.500 24 27 25q-7 0-6-3 3-3.500 0-6.500Q11 6 0 18z" fill="url(#e1)" />
          <path d="M0 18Q4 8.500 13 9q8 1 9 8.500-3-3.500-7-2-6 3.500-2.500 11Q16 33 24 34.500 19 37 13 35.200 0 31 0 18z" fill="url(#e2)" />
          <path d="M11.500 17Q8 27 16 31.500q8 4 17-4-5 9.500-14 8.500Q8 32 11.500 17z" fill="#0c4d9c" />
        </svg>
        <span className="mt-[6px] h-[5px] w-[9px] rounded-full bg-[#837b7a]" />
      </div>
      <div className="ml-[31px] mt-4 flex w-[35px] flex-col items-center">
        <svg viewBox="0 0 35 36" className="h-9 w-[35px]" fill="none">
          <circle cx="17.500" cy="18.500" r="17.300" fill="#fbd905" />
          <path d="M11 5.500Q18 5.500 27.500.5 26 8.500 18 10.500L25 25q-1 10-8.500 10-7-.500-7-7 1-6.500 8-6.500 2 0 2.500 1z" fill="#1bbf8a" />
        </svg>
        <span className="mt-[6px] h-[5px] w-[9px] rounded-full bg-[#837b7a]" />
      </div>
      <div className="ml-[20px] mt-[5px] flex h-[60px] w-[56px] flex-col items-center rounded-[5px] bg-[#f5eceb] pt-[11px] shadow-[0_0_2px_#cdbdbb]">
        <svg viewBox="0 0 36 36" className="h-9 w-9" fill="none">
          <circle cx="18" cy="18" r="15.200" stroke="#8e8e8e" strokeWidth="5" strokeDasharray="4.400 3.560" />
          <circle cx="18" cy="18" r="15" stroke="#d2d2d2" strokeWidth="4" strokeDasharray="3.600 4.254" />
          <circle cx="18" cy="18" r="12.700" fill="#26213a" stroke="#c9c9c9" strokeWidth="2.500" />
          <text x="18" y="17.500" textAnchor="middle" fontSize="7.800" fontWeight="700" fontFamily="Liberation Sans" fill="#f08a1d">Java EE</text>
          <text x="18" y="25.500" textAnchor="middle" fontSize="7.800" fontWeight="700" fontFamily="Liberation Sans" fill="#f08a1d">IDE</text>
        </svg>
        <span className="mt-[6px] h-[5px] w-6 shrink-0 rounded-full bg-[#0a78d4]" />
      </div>
      <div className="ml-auto flex h-[69px] items-center pr-[30px]">
        <svg viewBox="0 0 18 10" className="h-[10px] w-[18px]" fill="none">
          <path d="m.8 9.200 8.200-8 8.200 8" stroke="#1b1b1b" strokeWidth="1.500" />
        </svg>
        <svg viewBox="0 0 20 24" className="ml-[17px] h-6 w-5">
          <path d="M2 22.500q4-2 8-1 4-1 8 1l-2 1.500H4z" fill="#f2a91c" />
          <path d="M10 .5q6.500 0 6.800 7.500l2.500 8q.5 3-1.300 2.500L16.500 17Q16 23 10 23T3.500 17L2 18.500Q.2 19 .7 16l2.500-8Q3.500.5 10 .5z" fill="#111" />
          <ellipse cx="10" cy="16.500" rx="5" ry="5.800" fill="#fff" />
          <ellipse cx="8" cy="5.500" rx="1.500" ry="2.200" fill="#fff" />
          <ellipse cx="12" cy="5.500" rx="1.500" ry="2.200" fill="#fff" />
          <ellipse cx="10" cy="9" rx="4" ry="1.300" fill="#f2a91c" />
          <path d="M2.500 10.500q7.500 4 15 0v3Q13 15.500 8.500 14.500L8 18H5.500v-4.200l-3-.8z" fill="#e6211b" />
        </svg>
        <span className="ml-[20px] text-[23px] leading-none text-[#1b1b1b]">英</span>
        <svg viewBox="0 0 25 24" className="ml-[25px] h-6 w-[25px]" fill="none" stroke="#1b1b1b" strokeWidth="1.500">
          <path d="M15 1H3.500Q1 1 1 3.500v12.500Q1 18.500 3.500 18.500H17M5 23h14M8.500 19v4M14.500 19v4" />
          <path d="M17.500 1.500h6V7q0 2-2 2h-2q-2 0-2-2zM17.500 5h6M20.500 9v14.500" />
        </svg>
        <svg viewBox="0 0 25 22" className="ml-[11px] h-[22px] w-[25px]" fill="none" strokeWidth="1.500">
          <path d="M1 7.500h4.500L10.300 2.500v17L5.500 14.500H1z" stroke="#1b1b1b" strokeLinejoin="round" />
          <path d="M13 7.500q2.300 3.500 0 7" stroke="#1b1b1b" />
          <path d="M16.500 4.500q5 6.500 0 13M20 2q7 9 0 18" stroke="#b9aaa8" />
        </svg>
        <svg viewBox="0 0 25 20" className="ml-[11px] h-5 w-[25px]" fill="none">
          <path d="M8.500 4.500H18q3 0 3 3v7q0 3-3 3H4.500q-3 0-3-3V11" stroke="#1b1b1b" strokeWidth="1.500" />
          <path d="M9.500 6.500H17q2 0 2 2v5q0 2-2 2H5.500q-2 0-2-2V12h4z" fill="#1b1b1b" />
          <path d="M21 8.500h3.500v5H21zM5 0 .5 6.500h3L2.500 11 8 4.500H4.500z" fill="#1b1b1b" />
        </svg>
        <div className="ml-[24px] flex w-[80px] flex-col items-end text-[17px] leading-6 tracking-[-0.150px] text-[#1b1b1b]">
          <span>9:57</span>
          <span>2023/3/10</span>
        </div>
        <span className="ml-3 flex h-6 w-6 items-center justify-center rounded-full bg-[#0067c0] text-[16px] text-white">1</span>
      </div>
      <span className="absolute right-[15px] top-[43px] whitespace-nowrap text-[16px] leading-none text-[#f3ebe6] [text-shadow:1px_1px_1px_#6b6563]">
        CSDN @diao____si
      </span>
    </footer>
  );
}

export default function App() {
  return (
    <div className={`flex h-[1600px] w-[2560px] flex-col overflow-hidden bg-[#f0f0f0] ${LATIN}`}>
      <TitleBar />
      <MenuBar />
      <ToolBar />
      <div className="flex h-px justify-between">
        <div className="w-[2192px] bg-black" />
        <div className="w-6 bg-black" />
      </div>
      <main className="flex h-[1398px]">
        <ProjectExplorer />
        <Browser />
        <WelcomeView />
        <Strip />
      </main>
      <div className="flex flex-1 items-center pb-1 pl-[3px] text-[18px] leading-none">完成</div>
      <TaskBar />
    </div>
  );
}
